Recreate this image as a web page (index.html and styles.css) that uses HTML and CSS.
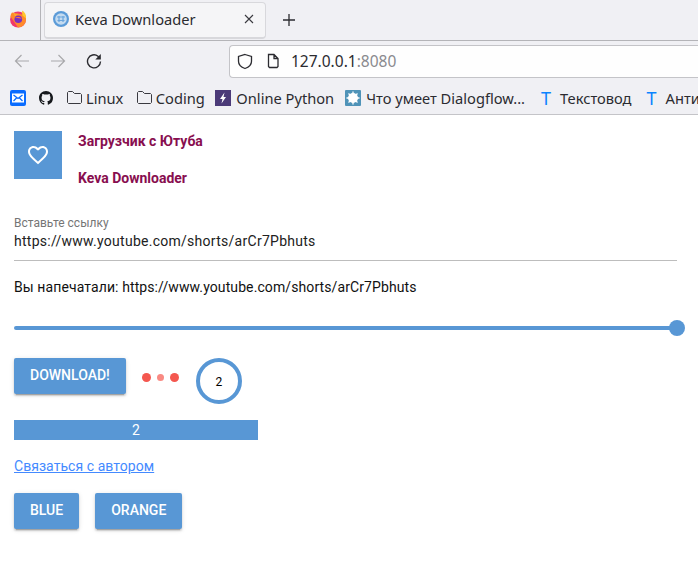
FILE: index.html
```html
<!DOCTYPE html>
<html lang="ru">
<head>
<meta charset="UTF-8" />
<title>Keva Downloader</title>
<link rel="stylesheet" href="styles.css">
</head>
<body>

<div class="browser">
  <div class="tabbar">
    <div class="fxbox">
      <svg width="18" height="18" viewBox="0 0 18 18">
        <circle cx="9" cy="9.500" r="8" fill="#f0386b"/>
        <path d="M3 2.500C2 4 1.500 5 1.500 6.500L9 17.500c4 0 8-3.500 8-8 0-2-.5-3.500-1.500-5L14 1l-1 3.500z" fill="#ff8a2a"/>
        <path d="M13 .5c3 1.500 4.500 4.500 4 8l-3.500-3z" fill="#ffc72e"/>
        <path d="M4.500 2.500l2 2 3-1-3.500 3z" fill="#ffb02e"/>
        <circle cx="9.300" cy="9.300" r="3.800" fill="#7b2fc0"/>
        <path d="M6 8c2-1.500 5.500-1.500 6.500 1-1-.8-3-1-6.500-1z" fill="#ff7a3a"/>
      </svg>
    </div>
    <div class="tab">
      <svg class="tabicon" width="16" height="16" viewBox="0 0 16 16">
        <circle cx="8" cy="8" r="8" fill="#5b9bd8"/>
        <circle cx="8" cy="8" r="5.800" fill="#c4dbf0"/>
        <path d="M4 6h8M4.500 9.500h7M6 5v6M10 5v6" stroke="#6aa5dc" stroke-width="1.200" fill="none"/>
      </svg>
      <span class="tabtitle">Keva Downloader</span>
      <svg class="tabclose" width="10" height="10" viewBox="0 0 10 10">
        <path d="M1 1l8 8M9 1l-8 8" stroke="#3a3a40" stroke-width="1.100" fill="none"/>
      </svg>
    </div>
    <svg class="newtab" width="14" height="14" viewBox="0 0 14 14">
      <path d="M7 1v12M1 7h12" stroke="#2b2b30" stroke-width="1.300" fill="none"/>
    </svg>
  </div>

  <div class="navbar">
    <svg width="16" height="16" viewBox="0 0 16 16">
      <path d="M15 8H1.500M7.500 2l-6 6 6 6" stroke="#a8a8ab" stroke-width="1.200" fill="none"/>
    </svg>
    <svg width="16" height="16" viewBox="0 0 16 16">
      <path d="M1 8h13.500M8.500 2l6 6-6 6" stroke="#a8a8ab" stroke-width="1.200" fill="none"/>
    </svg>
    <svg width="16" height="16" viewBox="0 0 16 16">
      <path d="M14.500 8.500A6.500 6.500 0 1 1 12 3.200L14 5.500" stroke="#2b2b30" stroke-width="1.400" fill="none"/>
      <path d="M14.800 1v5.500H9.300z" fill="#2b2b30"/>
    </svg>
    <div class="urlbar">
      <svg width="16" height="17" viewBox="0 0 16 17">
        <path d="M8 1.500l6.500 2v4.800c0 3.700-3 6-6.500 7.200-3.500-1.200-6.500-3.500-6.500-7.200V3.500z" stroke="#2b2b30" stroke-width="1.300" fill="none"/>
      </svg>
      <svg class="pageicon" width="14" height="16" viewBox="0 0 14 16">
        <path d="M2.500 1.500h5.500l4 4v8l-1 1h-7.500l-1-1zM8 1.500v4h4" stroke="#2b2b30" stroke-width="1.300" fill="none"/>
      </svg>
      <span class="urltext">127.0.0.1<span class="urlport">:8080</span></span>
    </div>
  </div>

  <div class="bookmarks">
    <div class="bookmark mail">
      <svg width="16" height="16" viewBox="0 0 16 16">
        <rect width="16" height="16" rx="2" fill="#0a6cff"/>
        <rect x="2" y="3.500" width="12" height="9" fill="#fff"/>
        <path d="M3.500 5l4.500 3.500L12.500 5M3.500 11L6.500 8M12.500 11L9.500 8" stroke="#0a6cff" stroke-width="1.300" fill="none"/>
      </svg>
    </div>
    <div class="bookmark gh">
      <svg width="14" height="14" viewBox="0 0 16 16">
        <path fill="#16181c" d="M8 0C3.580 0 0 3.580 0 8c0 3.540 2.290 6.530 5.470 7.590.4.070.55-.17.55-.38 0-.19-.01-.82-.01-1.490-2.010.37-2.530-.49-2.690-.94-.09-.23-.48-.94-.82-1.130-.28-.15-.68-.52-.01-.53.630-.01 1.080.58 1.230.82.720 1.210 1.870.87 2.330.66.070-.52.28-.87.510-1.070-1.780-.2-3.640-.89-3.640-3.950 0-.87.310-1.590.820-2.150-.08-.2-.36-1.020.08-2.120 0 0 .67-.21 2.200.82.640-.18 1.320-.27 2-.27s1.360.09 2 .27c1.530-1.040 2.200-.82 2.200-.82.440 1.100.160 1.920.080 2.120.51.560.82 1.270.82 2.150 0 3.070-1.870 3.750-3.650 3.950.29.250.54.730.54 1.480 0 1.070-.01 1.930-.01 2.200 0 .21.150.46.550.38A8.010 8.010 0 0 0 16 8c0-4.420-3.580-8-8-8z"/>
      </svg>
    </div>
    <div class="bookmark folder linux">
      <svg width="15" height="13" viewBox="0 0 15 13">
        <path d="M.5 11.500v-10l1-1h4l2 2h6l1 1v8l-1 1h-12z" stroke="#3a3a40" stroke-width="1" fill="none"/>
      </svg>
      <span>Linux</span>
    </div>
    <div class="bookmark folder coding">
      <svg width="15" height="13" viewBox="0 0 15 13">
        <path d="M.5 11.500v-10l1-1h4l2 2h6l1 1v8l-1 1h-12z" stroke="#3a3a40" stroke-width="1" fill="none"/>
      </svg>
      <span>Coding</span>
    </div>
    <div class="bookmark">
      <svg width="16" height="16" viewBox="0 0 16 16">
        <rect width="16" height="16" fill="#4b3a78"/>
        <path d="M9.500 2.500L5 9h2.500L6.500 13.500 11 7H8.500z" fill="#fff"/>
      </svg>
      <span>Online Python</span>
    </div>
    <div class="bookmark dialog">
      <svg width="16" height="16" viewBox="0 0 16 16">
        <rect width="16" height="16" rx="1" fill="#4f93b8"/>
        <circle cx="8" cy="8" r="5" fill="#fff"/>
        <path d="M8 1.500v13M1.500 8h13M3.500 3.500l9 9M12.500 3.500l-9 9" stroke="#fff" stroke-width="1.300"/>
      </svg>
      <span>Что умеет Dialogflow...</span>
    </div>
    <div class="bookmark">
      <span class="tmark">T</span>
      <span>Текстовод</span>
    </div>
    <div class="bookmark">
      <span class="tmark">T</span>
      <span>Анти</span>
    </div>
  </div>
</div>

<div class="page">
  <div class="header">
    <div class="avatar">
      <svg width="24" height="24" viewBox="0 0 24 24">
        <path fill="#fff" d="M16.500 3c-1.740 0-3.410.81-4.500 2.090C10.910 3.810 9.240 3 7.500 3 4.420 3 2 5.420 2 8.500c0 3.780 3.400 6.860 8.550 11.540L12 21.350l1.450-1.320C18.600 15.360 22 12.280 22 8.500 22 5.420 19.580 3 16.500 3zm-4.400 15.550l-.1.100-.1-.1C7.140 14.240 4 11.390 4 8.500 4 6.500 5.500 5 7.500 5c1.540 0 3.040.99 3.570 2.360h1.870C13.460 5.990 14.960 5 16.500 5c2 0 3.500 1.500 3.500 3.500 0 2.890-3.140 5.740-7.900 10.050z"/>
      </svg>
    </div>
    <div class="headtext">
      <div>Загрузчик с Ютуба</div>
      <div>Keva Downloader</div>
    </div>
  </div>

  <div class="field">
    <label class="fieldlabel">Вставьте ссылку</label>
    <div class="fieldvalue">https://www.youtube.com/shorts/arCr7Pbhuts</div>
  </div>

  <p class="echo">Вы напечатали: https://www.youtube.com/shorts/arCr7Pbhuts</p>

  <div class="slider">
    <div class="thumb"></div>
  </div>

  <div class="actions">
    <button class="btn">DOWNLOAD!</button>
    <div class="dots">
      <span class="dot"></span>
      <span class="dot dim"></span>
      <span class="dot"></span>
    </div>
    <div class="ring">2</div>
  </div>

  <div class="progress">2</div>

  <a class="contact" href="#">Связаться с автором</a>

  <div class="themes">
    <button class="btn">BLUE</button>
    <button class="btn">ORANGE</button>
  </div>
</div>

</body>
</html>
```

FILE: styles.css
```css
html, body {
  margin: 0;
  padding: 0;
  background: #fff;
}
body {
  width: 698px;
  height: 564px;
  overflow: hidden;
}
.browser {
  background: #f0f0f4;
  font-family: "Noto Sans", sans-serif;
  color: #2b2b30;
  border-bottom: 1px solid #c4c4c8;
  height: 114px;
  overflow: hidden;
}
.tabbar {
  display: flex;
  align-items: center;
  height: 40px;
  border-bottom: 1px solid #b4b4b8;
}
.fxbox {
  width: 41px;
  height: 40px;
  box-sizing: border-box;
  border-right: 1px solid #b4b4b8;
  padding: 10px 0 0 9px;
}
.tab {
  display: flex;
  align-items: center;
  width: 222px;
  height: 37px;
  box-sizing: border-box;
  margin-left: 3px;
  padding: 0 11px 2px 8px;
  background: #f5f5f7;
  border: 1px solid #d8d8dc;
  border-bottom-width: 2px;
  border-radius: 4px;
}
.tabtitle {
  flex: 1;
  margin-left: 6px;
  font-size: 14.67px;
}
.newtab {
  margin-left: 16px;
}
.navbar {
  display: flex;
  align-items: center;
  gap: 20px;
  height: 40px;
  padding-left: 14px;
}
.urlbar {
  display: flex;
  align-items: center;
  flex: 1;
  height: 31px;
  margin-left: 107px;
  padding-left: 7px;
  background: #fefefe;
  border: 1px solid #c4c4c8;
  border-right: none;
  border-radius: 4px 0 0 4px;
}
.pageicon {
  margin-left: 13px;
}
.urltext {
  margin-left: 11px;
  font-size: 15.5px;
}
.urlport {
  color: #8a8a8e;
}
.bookmarks {
  display: flex;
  align-items: center;
  height: 33px;
  padding-left: 10px;
  font-size: 14.67px;
  white-space: nowrap;
}
.bookmark {
  display: flex;
  align-items: center;
  gap: 5px;
  margin-right: 11px;
}
.mail {
  margin-right: 13px;
}
.gh {
  margin-right: 14px;
}
.folder {
  gap: 4px;
}
.linux {
  margin-right: 13.5px;
}
.coding {
  margin-right: 10.5px;
}
.dialog {
  margin-right: 12px;
}
.tmark {
  margin-left: 4px;
  margin-right: 4px;
  color: #0a84ff;
  font-size: 18px;
  line-height: 18px;
}

.page {
  padding: 15px 14px 0;
  font-family: Roboto, sans-serif;
}
.header {
  display: flex;
  gap: 16px;
  padding-top: 1px;
}
.avatar {
  display: flex;
  align-items: center;
  justify-content: center;
  width: 48px;
  height: 48px;
  background: #5897d5;
}
.headtext {
  display: flex;
  flex-direction: column;
  gap: 21px;
  padding-top: 2px;
  font-size: 14px;
  line-height: 16px;
  font-weight: 700;
  color: #880e4f;
}
.field {
  width: 663px;
  margin-top: 30px;
  padding-bottom: 11px;
  border-bottom: 1px solid #bdbdbd;
}
.fieldlabel {
  display: block;
  font-size: 12px;
  line-height: 14px;
  color: #757575;
}
.fieldvalue {
  margin-top: 3px;
  font-size: 14px;
  line-height: 16px;
  letter-spacing: 0.27px;
  color: #212121;
}
.echo {
  margin: 18px 0 0;
  font-size: 14px;
  line-height: 16px;
  letter-spacing: 0.1px;
  color: #111;
}
.slider {
  position: relative;
  width: 663px;
  height: 4px;
  margin-top: 31px;
  background: #5897d5;
  border-radius: 2px;
}
.thumb {
  position: absolute;
  right: -8px;
  top: -6px;
  width: 16px;
  height: 16px;
  border-radius: 50%;
  background: #5897d5;
}
.actions {
  display: flex;
  align-items: flex-start;
  margin-top: 28px;
}
.btn {
  height: 36px;
  padding: 0 16px 2px;
  border: none;
  border-radius: 2px;
  background: #5897d5;
  color: #fff;
  font-family: Roboto, sans-serif;
  font-size: 14px;
  font-weight: 500;
  box-shadow: 0 2px 2px rgba(0,0,0,0.14), 0 3px 1px -2px rgba(0,0,0,0.2), 0 1px 5px rgba(0,0,0,0.12);
}
.dots {
  display: flex;
  gap: 6px;
  margin: 15px 0 0 16px;
}
.dot {
  width: 9px;
  height: 9px;
  border-radius: 50%;
  background: #f4574f;
}
.dot.dim {
  width: 7px;
  height: 7px;
  margin-top: 1px;
  background: #f98a83;
}
.ring {
  width: 46px;
  height: 46px;
  box-sizing: border-box;
  margin-left: 17px;
  padding-top: 10px;
  border: 4px solid #5897d5;
  border-radius: 50%;
  font-size: 12px;
  line-height: 20px;
  text-align: center;
  color: #000;
}
.progress {
  width: 244px;
  height: 20px;
  margin-top: 16px;
  background: #5897d5;
  color: #fff;
  font-size: 14px;
  line-height: 20px;
  text-align: center;
}
.contact {
  display: block;
  width: max-content;
  margin-top: 18px;
  font-size: 14px;
  line-height: 16px;
  letter-spacing: 0.05px;
  color: #448aff;
}
.themes {
  display: flex;
  gap: 16px;
  margin-top: 19px;
}
```
